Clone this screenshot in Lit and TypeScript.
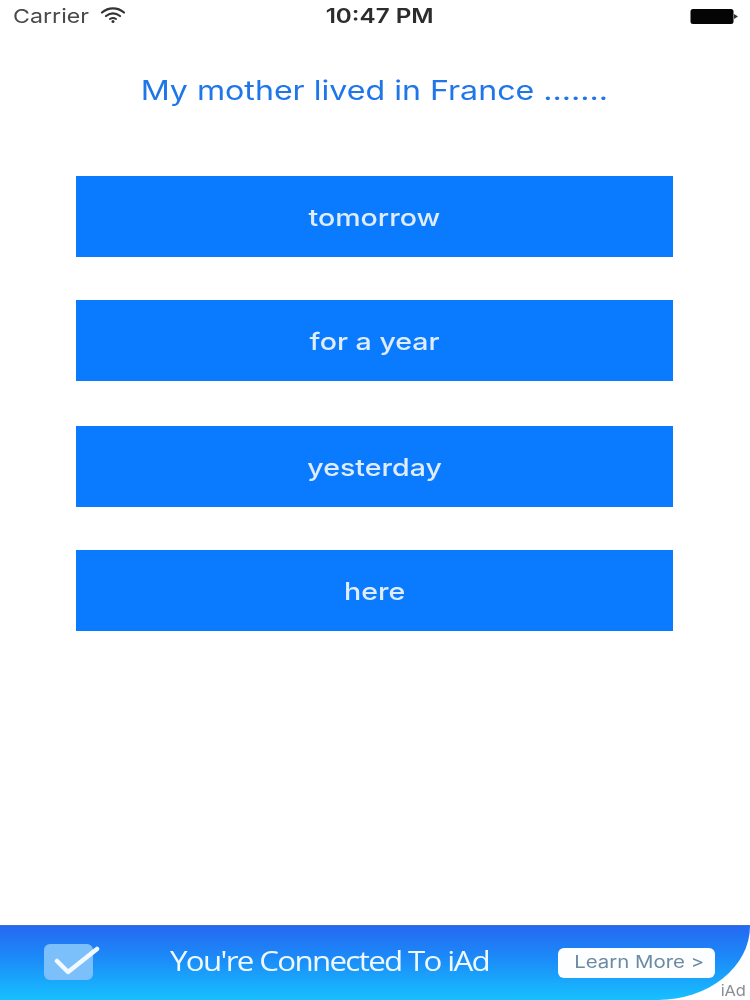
import { LitElement, html, css } from "lit";
import { customElement } from "lit/decorators.js";

const ANSWERS = ["tomorrow", "for a year", "yesterday", "here"];

@customElement("app-root")
export class AppRoot extends LitElement {
  static styles = css`
    :host {
      display: flex;
      flex-direction: column;
      width: 750px;
      height: 1000px;
      background: #fff;
      overflow: hidden;
      font-family: Inter, "Liberation Sans", sans-serif;
    }
    .wide {
      display: inline-block;
      white-space: nowrap;
      transform: scaleX(1.19);
      filter: blur(0.6px);
    }
    .status {
      display: grid;
      grid-template-columns: 1fr auto 1fr;
      align-items: center;
      height: 32px;
      padding: 0 10px 0 13px;
      box-sizing: border-box;
    }
    .left { display: flex; align-items: center; gap: 25px; font-size: 19px; color: #4a4a4a; }
    .left .wide { transform-origin: left center; transform: scaleX(1.22); }
    .wifi { display: block; margin-top: -3px; filter: blur(0.4px); }
    .time { margin-left: 6px; font-size: 20px; font-weight: 600; color: #2c2c2c; }
    .time .wide { transform: scaleX(1.21); }
    .right { display: flex; justify-content: flex-end; }
    .right svg { filter: blur(0.4px); }
    .title {
      margin: 41px 2px 0 0;
      height: 35px;
      line-height: 35px;
      text-align: center;
      font-size: 27px;
      font-weight: 400;
      color: #1f76e8;
    }
    .answers {
      display: flex;
      flex-direction: column;
      margin: 68px 77px 0 76px;
    }
    .answer {
      height: 81px;
      box-sizing: border-box;
      padding-top: 2px;
      display: flex;
      align-items: center;
      justify-content: center;
      background: #0a7aff;
      color: #dfecfb;
      font-size: 24px;
      font-weight: 500;
      margin-bottom: 43px;
    }
    .answer:nth-child(2) { margin-bottom: 45px; }
    .spacer { flex: 1; }
    .ad {
      height: 75px;
      display: flex;
      align-items: center;
      position: relative;
      box-sizing: border-box;
      padding-left: 44px;
      border-top: 1px solid #3f6fd8;
      border-bottom-right-radius: 92px 74px;
      background: linear-gradient(180deg, #2569f2 0%, #1b8cf8 45%, #17c0ff 100%);
    }
    .check { display: block; flex: none; margin-bottom: 3px; filter: blur(0.5px); }
    .ad-text {
      margin: 0 0 5px 69px;
      width: 320px;
      text-align: center;
      font-family: "Open Sans", "Liberation Sans", sans-serif;
      font-size: 27px;
      letter-spacing: -1.45px;
      color: #eef8ff;
    }
    .ad-text .wide { transform: scaleX(1.16); }
    .learn {
      margin: 0 0 1px 69px;
      width: 157px;
      height: 30px;
      padding: 0 0 2px 6px;
      border-radius: 6px;
      background: #fdfeff;
      color: #6b8aa3;
      display: flex;
      align-items: center;
      justify-content: center;
      font-size: 17px;
      box-sizing: border-box;
    }
    .learn .wide { transform: scaleX(1.2); }
    .mark {
      position: absolute;
      right: 4px;
      bottom: 0;
      font-size: 15px;
      color: #8a8f94;
      letter-spacing: -0.2px;
    }
    .mark .wide { transform: scaleX(1.1); transform-origin: right center; }
  `;

  render() {
    return html`
      <div class="status">
        <div class="left">
          <span class="wide">Carrier</span>
          <svg class="wifi" width="26" height="18" viewBox="0 0 26 18" fill="none" stroke="#333" stroke-linecap="round">
            <path d="M2 6.5 C8.5 1 17.5 1 24 6.5" stroke-width="2.2" />
            <path d="M6 10 C10.5 6.5 15.5 6.5 20 10" stroke-width="2.2" />
            <path d="M10 13 C12 11.8 14 11.8 16 13" stroke-width="2" />
            <circle cx="13" cy="15.4" r="1.5" fill="#333" stroke="none" />
          </svg>
        </div>
        <div class="time"><span class="wide">10:47 PM</span></div>
        <div class="right">
          <svg width="50" height="17" viewBox="0 0 50 17">
            <rect x="0.5" y="1" width="43" height="15" rx="2.5" fill="#050505" />
            <path d="M44 6 L48 8.5 L44 11 Z" fill="#333" />
          </svg>
        </div>
      </div>
      <h1 class="title"><span class="wide">My mother lived in France .......</span></h1>
      <div class="answers">
        ${ANSWERS.map((a) => html`<div class="answer"><span class="wide">${a}</span></div>`)}
      </div>
      <div class="spacer"></div>
      <div class="ad">
        <svg class="check" width="56" height="36" viewBox="0 0 56 36">
          <rect x="0" y="0" width="49" height="36" rx="6" fill="#7cc0fb" />
          <path d="M13 17 L24 28 L53 5" fill="none" stroke="#f2f9ff" stroke-width="4.5" stroke-linecap="round" stroke-linejoin="round" />
        </svg>
        <div class="ad-text"><span class="wide">You're Connected To iAd</span></div>
        <div class="learn"><span class="wide">Learn More &gt;</span></div>
        <div class="mark"><span class="wide">iAd</span></div>
      </div>
    `;
  }
}
